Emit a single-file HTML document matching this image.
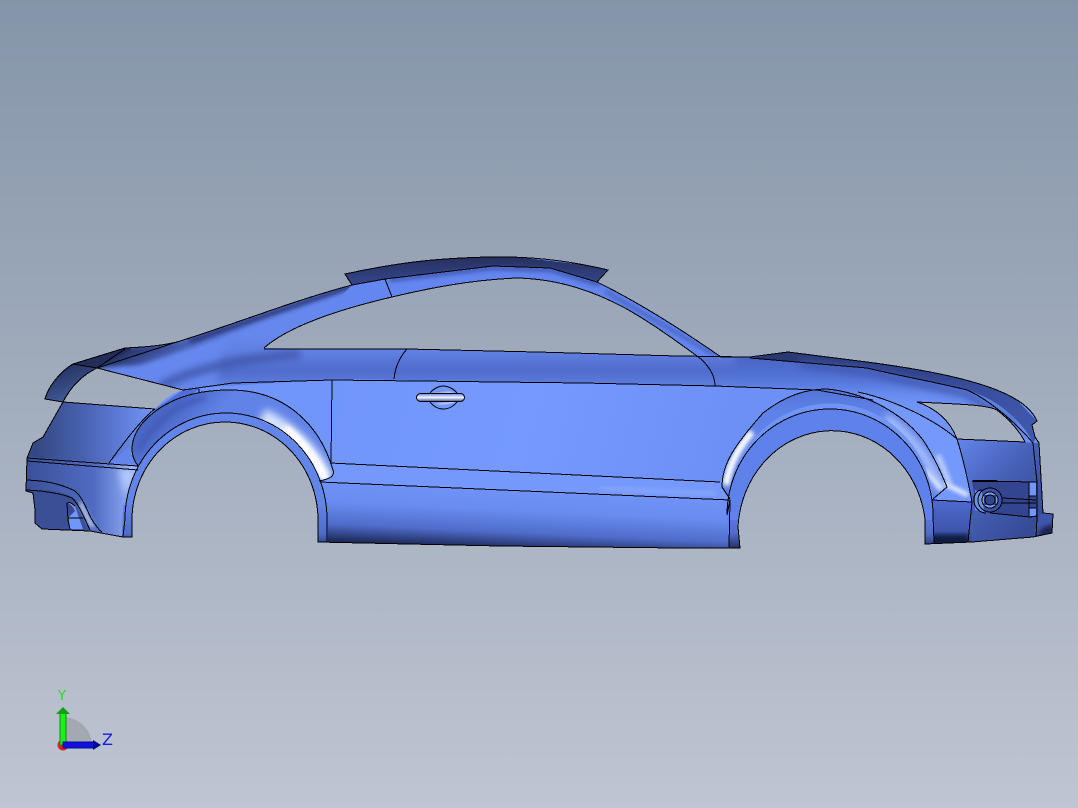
<!DOCTYPE html>
<html><head><meta charset="utf-8"><style>
html,body{margin:0;padding:0;width:1078px;height:808px;overflow:hidden;background:#a0aaba}
svg{display:block}
text{font-family:"DejaVu Sans","Liberation Sans",sans-serif}
</style></head><body>
<svg width="1078" height="808" viewBox="0 0 1078 808" xmlns="http://www.w3.org/2000/svg">
<defs>
<linearGradient id="bg" x1="0" y1="0" x2="0" y2="1"><stop offset="0" stop-color="#8595a9"/><stop offset="1" stop-color="#bfc5d2"/></linearGradient>
<linearGradient id="sill" gradientUnits="userSpaceOnUse" x1="525" y1="485" x2="522" y2="549"><stop offset="0" stop-color="#7194f8"/><stop offset=".4" stop-color="#6a8cf0"/><stop offset=".75" stop-color="#4f6cc9"/><stop offset="1" stop-color="#1f2c5e"/></linearGradient>
<linearGradient id="roof" gradientUnits="userSpaceOnUse" x1="0" y1="257" x2="0" y2="285"><stop offset="0" stop-color="#27315f"/><stop offset="1" stop-color="#34468c"/></linearGradient>
<linearGradient id="rpanel" gradientUnits="userSpaceOnUse" x1="35" y1="0" x2="150" y2="0"><stop offset="0" stop-color="#344780"/><stop offset=".45" stop-color="#4a64b4"/><stop offset="1" stop-color="#6f92f4"/></linearGradient>
<linearGradient id="rbump" gradientUnits="userSpaceOnUse" x1="27" y1="480" x2="138" y2="480"><stop offset="0" stop-color="#3b5098"/><stop offset=".6" stop-color="#4f6bc2"/><stop offset=".95" stop-color="#8fabf4"/></linearGradient>
<linearGradient id="spoil" gradientUnits="userSpaceOnUse" x1="60" y1="365" x2="75" y2="402"><stop offset="0" stop-color="#232e5c"/><stop offset="1" stop-color="#44609f"/></linearGradient>
<linearGradient id="deck" gradientUnits="userSpaceOnUse" x1="130" y1="342" x2="155" y2="385"><stop offset="0" stop-color="#1f2a55"/><stop offset=".45" stop-color="#3c5099"/><stop offset="1" stop-color="#6384ea"/></linearGradient>
<linearGradient id="fbump" gradientUnits="userSpaceOnUse" x1="960" y1="440" x2="1040" y2="520"><stop offset="0" stop-color="#6283ea"/><stop offset=".5" stop-color="#4560b6"/><stop offset="1" stop-color="#364a96"/></linearGradient>
<linearGradient id="hood" gradientUnits="userSpaceOnUse" x1="0" y1="358" x2="0" y2="396"><stop offset="0" stop-color="#4a65c4"/><stop offset=".6" stop-color="#5475da"/><stop offset="1" stop-color="#6a8ef2"/></linearGradient>
<linearGradient id="band" gradientUnits="userSpaceOnUse" x1="780" y1="352" x2="1030" y2="430"><stop offset="0" stop-color="#2a3872"/><stop offset=".6" stop-color="#33468f"/><stop offset="1" stop-color="#4058ac"/></linearGradient>
<linearGradient id="shoulder" gradientUnits="userSpaceOnUse" x1="0" y1="350" x2="0" y2="385"><stop offset="0" stop-color="#6282e6"/><stop offset=".6" stop-color="#4e6aca"/><stop offset="1" stop-color="#5e7fe0"/></linearGradient>
<linearGradient id="panel" gradientUnits="userSpaceOnUse" x1="330" y1="380" x2="720" y2="480"><stop offset="0" stop-color="#7196fb"/><stop offset=".5" stop-color="#7599ff"/><stop offset="1" stop-color="#6c90f6"/></linearGradient>
<linearGradient id="handle" x1="0" y1="0" x2="0" y2="1"><stop offset="0" stop-color="#5d7fe0"/><stop offset=".5" stop-color="#f4f8ff"/><stop offset="1" stop-color="#3a4f9a"/></linearGradient>
<linearGradient id="cup" x1="0" y1="0" x2="1" y2="1"><stop offset="0" stop-color="#3e56aa"/><stop offset=".6" stop-color="#b4c8fa"/><stop offset="1" stop-color="#6c90f0"/></linearGradient>
<linearGradient id="ffl" gradientUnits="userSpaceOnUse" x1="830" y1="389" x2="830" y2="412"><stop offset="0" stop-color="#5373d8"/><stop offset="1" stop-color="#5f82e8"/></linearGradient>
<linearGradient id="rfl" gradientUnits="userSpaceOnUse" x1="190" y1="392" x2="215" y2="416"><stop offset="0" stop-color="#4a67c6"/><stop offset="1" stop-color="#6183e8"/></linearGradient>
<linearGradient id="lowerfr" gradientUnits="userSpaceOnUse" x1="950" y1="500" x2="950" y2="545"><stop offset="0" stop-color="#4d6ace"/><stop offset=".7" stop-color="#3e55ac"/><stop offset="1" stop-color="#141c44"/></linearGradient>
<linearGradient id="lip" gradientUnits="userSpaceOnUse" x1="0" y1="500" x2="0" y2="548"><stop offset="0" stop-color="#6486ec"/><stop offset=".7" stop-color="#4f6cc8"/><stop offset="1" stop-color="#232f66"/></linearGradient>
<filter id="b2" x="-30%" y="-30%" width="160%" height="160%"><feGaussianBlur stdDeviation="2"/></filter>
<filter id="b4" x="-30%" y="-50%" width="160%" height="200%"><feGaussianBlur stdDeviation="4"/></filter>
<filter id="b7" x="-30%" y="-80%" width="160%" height="260%"><feGaussianBlur stdDeviation="7"/></filter>
<clipPath id="rflare"><path d="M138,466 C126,450 132,428 157,410 C180,394 205,390 230,390 C285,390 320,425 333,470 C335,476 330,479 320,481 A101,106 0 0 0 139,466 Z"/></clipPath>
<clipPath id="fflare"><path d="M729,499 L722,487 C722,465 733,447 763,413 C785,396 805,389 827,389 C860,392 900,410 923,440 C935,458 942,475 947,487 L933,499 A103,106 0 0 0 728,499 Z"/></clipPath>
<clipPath id="car"><path clip-rule="evenodd" d="M45,399 C48,388 58,373 73,364 L125,348 C145,347 160,346 177,342 C235,324 295,300 352,285 L345,274 C400,262 440,258 490,257 C535,256 575,262 608,270 L597,282 C640,303 685,332 721,357 L750,357 L788,352 L867,362 C920,369 985,380 1017,400 C1027,406 1034,414 1037,421 L1032,425 L1035,437 L1039,443 L1043,513 L1053,514 L1052,533 L1033,537 L972,542 L925,544 L925,519 A94,102 0 0 0 738,527 L740,548 L680,548 L500,546 L318,542 L318,520 A93,98 0 0 0 132,520 L132,537 L123,537 L90,531 L42,529 L35,523 L35,510 L33,493 L26,491 L27,458 L33,443 L43,437 L63,402 Z
M264,348 C290,325 345,308 392,297 C430,288 470,280 517,278 C560,279 595,292 625,308 C650,322 675,340 697,356 L537,352 L407,349 L313,349 Z
M63,402 C70,388 82,375 97,368 L183,390 C172,393 162,401 155,409 Z
M917,402 C950,404 985,404 997,410 C1010,420 1020,432 1025,442 L957,439 C950,420 935,408 917,402 Z"/></clipPath>
</defs>
<rect width="1078" height="808" fill="url(#bg)"/>

<g clip-path="url(#car)">
<rect x="0" y="240" width="1078" height="320" fill="#7094f8"/>

<!-- rear quarter / C pillar -->
<path d="M97,368 L125,348 L177,342 L352,285 L392,297 L264,348 L313,349 L332,380 L233,383 L183,390 Z" fill="#6688ee"/>
<path d="M73,364 L125,348 L177,342 L240,323 L300,302 L352,285 L354,288 L300,310 L200,345 L140,365 L97,368 Z" fill="url(#deck)" filter="url(#b2)"/>
<path d="M60,362 L125,346 L132,349 L97,368 Z" fill="#232d5a"/>
<path d="M190,341 L352,286" stroke="#2a3876" stroke-width="5" fill="none" filter="url(#b2)"/>

<!-- shoulder -->
<path d="M225,340 L313,340 L407,340 L537,345 L720,350 L790,350 L790,395 L583,392 L393,388 L250,388 L215,385 Z" fill="url(#shoulder)" filter="url(#b4)"/>
<path d="M160,387 C190,370 235,359 300,354" stroke="#3f57ac" stroke-width="8" fill="none" filter="url(#b4)"/>
<path d="M40,399 L48,385 L60,362 L97,368 L75,385 L63,403 Z" fill="url(#spoil)"/>

<!-- roof -->
<path d="M340,270 L490,254 L612,268 L597,283 L550,268 L493,266 L385,279 L352,286 Z" fill="url(#roof)"/>
<path d="M352,285 L385,279 L493,266 L550,268 L597,282 L650,310 L721,357 L697,356 L625,308 C595,292 560,279 517,278 C470,280 430,288 392,297 L320,318 Z" fill="#6486f0"/>
<path d="M390,280 L493,268 L550,270 L600,285" stroke="#34489a" stroke-width="3" fill="none" filter="url(#b2)"/>
<path d="M605,291 L715,355" stroke="#3e56ac" stroke-width="2.500" fill="none" filter="url(#b2)"/>

<!-- hood -->
<path d="M735,345 L800,345 L867,355 L1020,395 L1045,445 L1028,446 C1010,425 985,408 940,404 L917,402 L873,402 L827,396 L735,396 Z" fill="url(#hood)" filter="url(#b4)"/>
<path d="M750,358 L788,352 L867,362 C920,369 985,380 1017,400 L1037,421 L1035,440 L1033,443 C1022,420 995,398 967,390 L867,368 Z" fill="url(#band)"/>
<path d="M800,364 L867,372 L967,394 L1015,425" stroke="#3f58ae" stroke-width="7" fill="none" filter="url(#b4)"/>

<!-- door panels -->
<path d="M200,388 L332,379 L583,383 L720,387 L817,390 L763,413 L733,450 L721,482 L330,463 L320,433 Z" fill="url(#panel)"/>

<!-- sill -->
<path d="M330,463 L720,482 L730,500 L320,482 Z" fill="#7498fb"/>
<path d="M600,488 L716,494" stroke="#92adfc" stroke-width="5" fill="none" filter="url(#b2)" opacity=".6"/>
<path d="M318,481 L730,500 L740,552 L318,546 Z" fill="url(#sill)"/>

<!-- rear panel -->
<path d="M20,395 L63,402 L155,409 L130,450 L108,466 L20,458 Z" fill="url(#rpanel)"/>
<path d="M22,456 L138,466 L132,540 L90,533 L22,530 Z" fill="url(#rbump)"/>
<path d="M118,468 L136,470 C132,480 128,490 126,498 Z" fill="#c0d2ff" filter="url(#b4)" opacity=".85"/>
<path d="M108,463 L130,447 L157,410 L140,465 Z" fill="#6486ec"/>
<path d="M155,409 L183,390 L200,388 L160,420 L135,450 Z" fill="#4f6fd6"/>
<path d="M22,490 L33,493 L35,523 L42,529 L72,532 L90,530 L80,505 C70,490 50,490 22,490 Z" fill="#3a4f95"/>
<path d="M67,505 C68,500 71,503 75,506 L83,529 L70,529 Z" fill="#7096fa"/>
<path d="M67,503 C69,503 73,506 75,511 L68,518 Z" fill="#39498c"/>
<path d="M80,503 C85,512 88,520 93,527" stroke="#e8f0ff" stroke-width="3" fill="none" filter="url(#b2)"/>

<!-- rear arch -->
<path d="M125,519 A101,106 0 0 1 327,519 L327,545 L318,545 L318,520 A93,98 0 0 0 132,520 L132,540 L125,540 Z" fill="#6285ea"/>
<path d="M123,505 L133,505 L133,540 L122,540 Z M317,505 L328,505 L328,545 L317,545 Z" fill="url(#lip)"/>
<path d="M138,466 C126,450 132,428 157,410 C180,394 205,390 230,390 C285,390 320,425 333,470 C335,476 330,479 320,481 A101,106 0 0 0 139,466 Z" fill="url(#rfl)"/>
<g clip-path="url(#rflare)">
<path d="M262,416 C285,428 312,448 326,480" stroke="#d8e4ff" stroke-width="16" fill="none" filter="url(#b4)"/>
<path d="M285,428 C302,442 316,458 326,480" stroke="#fff" stroke-width="8" fill="none" filter="url(#b2)"/>
<path d="M140,450 C150,425 175,405 205,398" stroke="#3f57ac" stroke-width="5" fill="none" filter="url(#b2)" opacity=".6"/>
</g>

<!-- front lower -->
<path d="M932,500 L972,500 L1040,515 L1053,514 L1053,540 L925,548 Z" fill="url(#lowerfr)"/>
<path d="M957,439 L1040,443 L1044,516 L1033,540 L968,542 L972,502 Z" fill="url(#fbump)"/>
<path d="M1040,514 L1053,514 L1052,533 L1033,537 Z" fill="#3f56ae"/>
<path d="M1042,528 L1053,524 L1053,535 L1036,538 Z" fill="#1a2450" filter="url(#b2)"/>
<path d="M925,535 L968,535 L968,545 L925,546 Z" fill="#111a42" filter="url(#b2)"/>

<!-- front arch -->
<path d="M729,550 L727,515 A103,106 0 0 1 933,515 L934,546 L925,546 L925,519 A94,102 0 0 0 738,527 L740,552 Z" fill="#5f82ea"/>
<path d="M729,548 L740,548 L740,520 L730,520 Z" fill="url(#lip)"/>
<path d="M925,546 L934,546 L934,520 L925,520 Z" fill="url(#lip)"/>
<path d="M858,392 C895,400 935,420 957,439 L968,478 L972,502 L932,500 L947,487 C940,470 925,435 873,400 Z" fill="#7498fb"/>
<path d="M729,499 L722,487 C722,465 733,447 763,413 C785,396 805,389 827,389 C860,392 900,410 923,440 C935,458 942,475 947,487 L933,499 A103,106 0 0 0 728,499 Z" fill="url(#ffl)"/>
<g clip-path="url(#fflare)">
<path d="M726,485 C729,465 738,448 752,432" stroke="#fff" stroke-width="7" fill="none" filter="url(#b2)"/>
<path d="M885,418 C910,435 930,460 942,490" stroke="#a8bffc" stroke-width="10" fill="none" filter="url(#b4)"/>
<path d="M925,470 L942,490" stroke="#eaf0ff" stroke-width="4" fill="none" filter="url(#b2)"/>
</g>
<path d="M945,484 L968,495" stroke="#fff" stroke-width="4" fill="none" filter="url(#b2)"/>
<path d="M938,455 L950,485" stroke="#c4d4ff" stroke-width="5" fill="none" filter="url(#b2)"/>

<!-- fog lamp box -->
<path d="M972,481 L1037,482 L1037,516 L1030,517 L990,513 L976,505 Z" fill="#344590"/>
<rect x="1029" y="482" width="7" height="14" fill="#7096f8"/>
<rect x="1029" y="508" width="7" height="8" fill="#7096f8"/>
<circle cx="990" cy="500" r="12" fill="#3b51a6"/>
<ellipse cx="990" cy="500" rx="8" ry="8" fill="#7a9cf5"/>
<path d="M984,495 L996,495 L996,505 L984,505 Z" fill="#32468f"/>
<path d="M982,492 L975,490 L975,510 L984,512 Z" fill="#6c8fe8"/>
</g>

<!-- lines -->
<g fill="none" stroke="#000" stroke-width="1" shape-rendering="crispEdges">
<path d="M45,399 C48,388 58,373 73,364 L125,348 C145,347 160,346 177,342 C235,324 295,300 352,285 L345,274 C400,262 440,258 490,257 C535,256 575,262 608,270 L597,282 C640,303 685,332 721,357 L750,357 L788,352 L867,362 C920,369 985,380 1017,400 C1027,406 1034,414 1037,421 L1032,425 L1035,437 L1039,443 L1043,513 L1053,514 L1052,533 L1033,537 L972,542 L925,544 L925,519 A94,102 0 0 0 738,527 L740,548 L680,548 L500,546 L318,542 L318,520 A93,98 0 0 0 132,520 L132,537 L123,537 L90,531 L42,529 L35,523 L35,510 L33,493 L26,491 L27,458 L33,443 L43,437 L63,402 Z"/>
<path d="M264,348 C290,325 345,308 392,297 C430,288 470,280 517,278 C560,279 595,292 625,308 C650,322 675,340 697,356 M264,349 L313,349 L407,349 L537,352 L677,356 L750,357"/>
<path d="M63,402 C70,388 82,375 97,368 L183,390 M63,402 L155,409"/>
<path d="M73,364 L97,368 L125,349 M97,368 L177,342"/>
<path d="M352,285 L385,279 L493,266 L550,268 L597,282 M385,279 L392,297"/>
<path d="M407,349 C399,358 395,368 394,379 M697,356 C708,364 715,375 715,386"/>
<path d="M183,390 L233,383 L332,380 L583,383 L715,386 L817,390 L873,400"/>
<path d="M199,389 L199,393 M332,380 L331,463"/>
<!-- rear arches -->
<path d="M123,537 L125,519 A101,106 0 0 1 327,519 L327,542"/>
<path d="M138,466 C126,450 132,428 157,410 C180,394 205,390 230,390 C285,390 320,425 333,470 C335,476 330,479 319,481"/>
<path d="M155,409 C142,418 122,445 109,463"/>
<path d="M27,458 L138,466 M27,461 L138,470"/>
<path d="M27,480 C50,481 62,485 73,490 C80,493 85,505 91,518 C95,525 100,531 102,532 M26,490 C50,491 65,495 72,498 C78,503 83,515 90,530"/>
<path d="M67,505 C68,500 71,503 75,506 M67,503 L68,520 L70,529 M68,518 L83,518"/>
<!-- sill -->
<path d="M330,463 L720,482 M320,482 L730,500 M730,500 L729,547"/>
<!-- front arches -->
<path d="M730,500 L727,515 A103,106 0 0 1 933,515 L934,543"/>
<path d="M730,499 L722,487 C722,465 733,447 763,413 C785,396 805,389 827,389 C860,392 900,410 923,440 C935,458 942,475 947,487 L933,499"/>
<path d="M858,392 C895,400 935,420 957,439 C962,455 968,480 972,502 L968,542"/>
<path d="M917,402 C950,404 985,404 997,410 C1010,420 1020,432 1025,442 L957,439 C950,420 935,408 917,402"/>
<path d="M750,358 L867,368 C900,376 935,382 967,390 C990,400 1018,425 1033,443 L1037,482 L1037,518 L1036,537"/>
<path d="M932,500 L972,502"/>
<path d="M972,481 L1037,482 M1037,516 L1030,517 L990,513 M1029,482 L1029,516 M1029,496 L1036,496 M1029,508 L1036,508"/>
<path d="M1002,498 L1036,500 M1002,503 L1036,503"/>
<circle cx="990" cy="500" r="12"/>
<circle cx="990" cy="500" r="8"/>
<circle cx="990" cy="500" r="5"/>
<path d="M982,490 C976,490 973,496 974,502 C975,508 980,513 986,513"/>
<path d="M973,481 L997,481" stroke-width="2"/>
</g>

<!-- door handle -->
<path d="M430,394 A20,13 0 0 1 457,394 Z" fill="url(#cup)"/>
<path d="M430,401 A19,13 0 0 0 457,401 Z" fill="url(#cup)"/>
<path d="M430,393 C433,389 439,386 443,386 C448,386 454,389 457,393 M430,402 C434,407 439,409 443,409 C448,409 453,407 457,402" fill="none" stroke="#000"/>
<rect x="416.500" y="393.500" width="48" height="8" rx="4" fill="url(#handle)" stroke="#000"/>

<!-- triad -->
<path d="M63,745 L63,717 A29,29 0 0 1 92,745 Z" fill="#a4a8b0"/>
<circle cx="63" cy="745" r="5.500" fill="#e0201c"/>
<rect x="60" y="712" width="6" height="33" fill="#1cf01c" stroke="#128a12" stroke-width="1"/>
<path d="M63,707 L70,714 L56,714 Z" fill="#11a011"/>
<rect x="63" y="742" width="31" height="6" fill="#1010e0" stroke="#0a0a90" stroke-width="1"/>
<path d="M101,745 L93,740 L93,750 Z" fill="#080890"/>
<text x="58" y="700" font-size="13" fill="#1fdc1f">Y</text>
<text x="102" y="745" font-size="16" fill="#1a1ae6">Z</text>
</svg>
</body></html>
